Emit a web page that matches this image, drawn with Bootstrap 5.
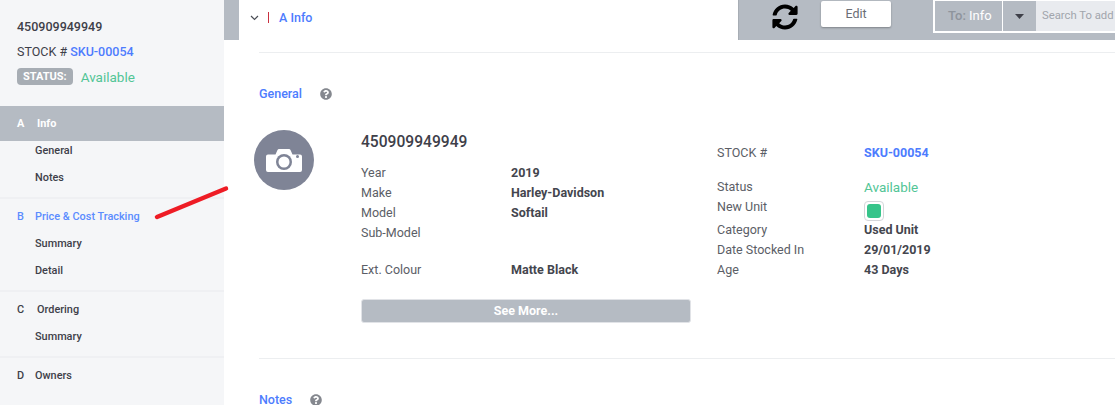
<!DOCTYPE html>
<html lang="en">
<head>
    <meta charset="UTF-8">
    <meta name="viewport" content="width=device-width, initial-scale=1.0">
    <title>Stock Unit</title>
    <link rel="stylesheet" href="https://cdn.jsdelivr.net/npm/bootstrap@5.3.0/dist/css/bootstrap.min.css">
    <style>
        html, body { height: 405px; overflow: hidden; }
        body { font-family: Roboto, "Liberation Sans", sans-serif; font-size: 12.5px; color: #4a4d55; background: #fff; }
        a { text-decoration: none; color: #4d7cfe; }
        .page-wrap { height: 405px; }

        .side-bar { width: 224px; flex: none; background: #f5f6f8; color: #3e4049; }
        .side-head { height: 106px; padding: 18px 17px 0; font-size: 12.5px; }
        .head-line { height: 25px; line-height: 18px; }
        .status-tag { background: #a7adb4; color: #fff; font-size: 11px; font-weight: 700; border-radius: 4px; padding: 0 6px; height: 17px; line-height: 17px; margin-right: 8px; }
        .text-avail { color: #52c596; font-size: 13.5px; }
        .side-sect { border-bottom: 2px solid #eff0f3; }
        .side-title { height: 35px; padding: 2px 0 0 17px; font-weight: 500; font-size: 10.9px; }
        .side-title.on { background: #b5bbc3; color: #fff; font-weight: 700; }
        .side-title.blue { color: #5b8cff; }
        .side-letter { width: 18px; }
        .side-word { margin-left: 2px; }
        .side-subs { margin-top: -4px; padding-bottom: 6px; }
        .side-sub { display: block; height: 27px; line-height: 27px; padding-left: 35px; font-size: 10.9px; font-weight: 500; color: #3e4049; }

        .main-area { min-width: 0; }
        .top-strip { height: 40px; }
        .strip-stub { width: 15px; background: #b5bbc3; }
        .crumb { padding-left: 11px; color: #4d7cfe; font-weight: 500; }
        .crumb-bar { width: 1px; height: 11px; background: #c9303f; margin: 0 10px 6px 9px; }
        .tool-bar { width: 377px; background: #b5bbc3; border-left: 1px solid #a7adb4; }
        .refresh-ico { margin: 4px 0 0 33px; }
        .btn-edit { width: 70px; height: 26px; margin: 1px 0 0 23px; padding: 1px 0 0; background: #fff; border: 0; color: #6b6e75; font-size: 12.5px; border-radius: 2px; box-shadow: 0 1px 2px rgba(0,0,0,.3); }
        .to-box { height: 33px; width: 182px; margin-left: 42px; border: 2px solid #fff; border-right: 0; border-top-width: 1px; overflow: hidden; }
        .to-label { width: 68px; flex: none; padding-left: 13px; line-height: 30px; font-size: 13px; color: #fff; border-right: 1px solid #fff; }
        .to-label span { color: #8e949c; font-weight: 500; }
        .to-caret { width: 33px; flex: none; }
        .to-search { background: #e9ebef; color: #a1a5ac; font-size: 11.3px; line-height: 30px; padding-left: 6px; white-space: nowrap; }

        .content-pad { padding-left: 35px; }
        .rule-line { border-top: 1px solid #eceef0; }
        .sect-head { margin-top: 32px; height: 18px; }
        .sect-name { font-weight: 500; color: #4d7cfe; font-size: 12.5px; }
        .help-ico { margin-left: 18px; }
        .cam-circle { width: 60px; height: 60px; border-radius: 50%; background: #7f8496; margin: -1px 47px 0 -5px; flex: none; }
        .unit-col { width: 330px; margin-right: 26px; }
        .unit-title { font-size: 15.6px; font-weight: 500; color: #3e4049; height: 32px; line-height: 22px; }
        .info-row { height: 20px; line-height: 20px; }
        .info-key { width: 150px; color: #5b5e66; }
        .info-val { font-weight: 700; color: #44464e; }
        .key-narrow { width: 147px; }
        .see-more { height: 24px; width: 330px; padding: 0; background: #b5bbc3; color: #fff; font-weight: 700; font-size: 12.5px; border: 1px solid #e1e3e7; border-radius: 3px; margin-top: 19px; }
        .tick-box { width: 20px; height: 20px; border: 1px solid #d4d6da; border-radius: 4px; }
        .tick-fill { width: 14px; height: 14px; background: #36c48a; border-radius: 3px; }
        .red-mark { position: absolute; left: 150px; top: 180px; }
    </style>
</head>
<body>
    <div class="d-flex page-wrap position-relative">
        <aside class="side-bar">
            <div class="side-head">
                <div class="head-line fw-medium">450909949949</div>
                <div class="head-line">STOCK # <a href="#" class="fw-medium">SKU-00054</a></div>
                <div class="head-line d-flex align-items-start"><span class="status-tag">STATUS:</span><span class="text-avail">Available</span></div>
            </div>
            <div class="side-sect">
                <div class="side-title on d-flex align-items-center"><span class="side-letter">A</span><span class="side-word">Info</span></div>
                <div class="side-subs">
                    <a href="#" class="side-sub">General</a>
                    <a href="#" class="side-sub">Notes</a>
                </div>
            </div>
            <div class="side-sect">
                <div class="side-title blue d-flex align-items-center"><span class="side-letter">B</span><span>Price &amp; Cost Tracking</span></div>
                <div class="side-subs">
                    <a href="#" class="side-sub">Summary</a>
                    <a href="#" class="side-sub">Detail</a>
                </div>
            </div>
            <div class="side-sect">
                <div class="side-title d-flex align-items-center"><span class="side-letter">C</span><span class="side-word">Ordering</span></div>
                <div class="side-subs">
                    <a href="#" class="side-sub">Summary</a>
                </div>
            </div>
            <div class="side-title d-flex align-items-center"><span class="side-letter">D</span><span>Owners</span></div>
        </aside>

        <main class="main-area flex-grow-1">
            <div class="top-strip d-flex">
                <div class="strip-stub"></div>
                <div class="crumb flex-grow-1 d-flex align-items-center">
                    <svg width="9" height="6" viewBox="0 0 9 6" class="mb-1"><path d="M1 1l3.5 3.5L8 1" fill="none" stroke="#4a4d55" stroke-width="1.2"/></svg>
                    <span class="crumb-bar"></span>
                    <span class="mb-1">A Info</span>
                </div>
                <div class="tool-bar d-flex align-items-start">
                    <svg class="refresh-ico" width="26" height="26" viewBox="0 0 512 512"><path fill="#000" d="M370.72 133.28C339.458 104.008 298.888 87.962 255.848 88c-77.458.068-144.328 53.178-162.791 126.85-1.344 5.363-6.122 9.15-11.651 9.15H24.103c-7.498 0-13.194-6.807-11.807-14.176C33.933 94.924 134.813 8 256 8c66.448 0 126.791 26.136 171.315 68.685L463.03 40.97C478.149 25.851 504 36.559 504 57.941V192c0 13.255-10.745 24-24 24H345.941c-21.382 0-32.09-25.851-16.971-40.971l41.75-41.749zM32 296h134.059c21.382 0 32.09 25.851 16.971 40.971l-41.75 41.75c31.262 29.273 71.835 45.319 114.876 45.28 77.418-.07 144.315-53.144 162.787-126.849 1.344-5.363 6.122-9.15 11.651-9.15h57.304c7.498 0 13.194 6.807 11.807 14.176C478.067 417.076 377.187 504 256 504c-66.448 0-126.791-26.136-171.315-68.685L48.97 471.03C33.851 486.149 8 475.441 8 454.059V320c0-13.255 10.745-24 24-24z"/></svg>
                    <button class="btn btn-edit">Edit</button>
                    <div class="to-box d-flex">
                        <div class="to-label"><span>To:</span> Info</div>
                        <div class="to-caret d-flex align-items-center justify-content-center"><svg width="9" height="5" viewBox="0 0 9 5"><path d="M0 0h9L4.5 5z" fill="#3e4049"/></svg></div>
                        <div class="to-search flex-grow-1">Search To add</div>
                    </div>
                </div>
            </div>

            <div class="content-pad">
                <div class="rule-line" style="margin-top: 12px"></div>
                <div class="sect-head d-flex align-items-center">
                    <span class="sect-name">General</span>
                    <svg class="help-ico" width="12" height="12" viewBox="0 0 512 512"><path fill="#85888f" d="M504 256c0 136.997-111.043 248-248 248S8 392.997 8 256C8 119.083 119.043 8 256 8s248 111.083 248 248zM262.655 90c-54.497 0-89.255 22.957-116.549 63.758-3.536 5.286-2.353 12.415 2.715 16.258l34.699 26.31c5.205 3.947 12.621 3.008 16.665-2.122 17.864-22.658 30.113-35.797 57.303-35.797 20.429 0 45.698 13.148 45.698 32.958 0 14.976-12.363 22.667-32.534 33.976C247.128 238.528 216 254.941 216 296v4c0 6.627 5.373 12 12 12h56c6.627 0 12-5.373 12-12v-1.333c0-28.462 83.186-29.647 83.186-106.667 0-58.002-60.165-102-116.531-102zM256 338c-25.365 0-46 20.635-46 46 0 25.364 20.635 46 46 46s46-20.636 46-46c0-25.365-20.635-46-46-46z"/></svg>
                </div>
                <div class="d-flex" style="margin-top: 28px">
                    <div class="cam-circle d-flex align-items-center justify-content-center">
                        <svg width="36" height="23" viewBox="0 0 36 23"><path fill="#fff" d="M2 5.500h7.500L11.500 1q.5-1 1.500-1h10q1 0 1.500 1l2 4.500H34q2 0 2 2V21q0 2-2 2H2q-2 0-2-2V7.500q0-2 2-2z"/><circle cx="18" cy="13" r="8" fill="#7f8496"/><circle cx="18" cy="13" r="5.500" fill="#fff"/><circle cx="31.500" cy="7.500" r="1.500" fill="#7f8496"/></svg>
                    </div>
                    <div class="unit-col">
                        <div class="unit-title">450909949949</div>
                        <div class="info-row d-flex"><span class="info-key">Year</span><span class="info-val">2019</span></div>
                        <div class="info-row d-flex"><span class="info-key">Make</span><span class="info-val">Harley-Davidson</span></div>
                        <div class="info-row d-flex"><span class="info-key">Model</span><span class="info-val">Softail</span></div>
                        <div class="info-row d-flex"><span class="info-key">Sub-Model</span></div>
                        <div class="info-row d-flex" style="margin-top: 17px"><span class="info-key">Ext. Colour</span><span class="info-val">Matte Black</span></div>
                        <button class="btn see-more d-block">See More...</button>
                    </div>
                    <div>
                        <div class="info-row d-flex" style="margin-top: 12px"><span class="info-key key-narrow">STOCK #</span><a href="#" class="fw-bold">SKU-00054</a></div>
                        <div class="info-row d-flex" style="margin-top: 14px"><span class="info-key key-narrow">Status</span><span class="text-avail">Available</span></div>
                        <div class="info-row d-flex"><span class="info-key key-narrow">New Unit</span><span class="tick-box d-flex align-items-center justify-content-center mt-1"><span class="tick-fill"></span></span></div>
                        <div class="info-row d-flex" style="margin-top: 3px"><span class="info-key key-narrow">Category</span><span class="info-val">Used Unit</span></div>
                        <div class="info-row d-flex"><span class="info-key key-narrow">Date Stocked In</span><span class="info-val">29/01/2019</span></div>
                        <div class="info-row d-flex"><span class="info-key key-narrow">Age</span><span class="info-val">43 Days</span></div>
                    </div>
                </div>
                <div class="rule-line" style="margin-top: 35px"></div>
                <div class="sect-head d-flex align-items-center">
                    <span class="sect-name">Notes</span>
                    <svg class="help-ico" width="12" height="12" viewBox="0 0 512 512"><path fill="#85888f" d="M504 256c0 136.997-111.043 248-248 248S8 392.997 8 256C8 119.083 119.043 8 256 8s248 111.083 248 248zM262.655 90c-54.497 0-89.255 22.957-116.549 63.758-3.536 5.286-2.353 12.415 2.715 16.258l34.699 26.31c5.205 3.947 12.621 3.008 16.665-2.122 17.864-22.658 30.113-35.797 57.303-35.797 20.429 0 45.698 13.148 45.698 32.958 0 14.976-12.363 22.667-32.534 33.976C247.128 238.528 216 254.941 216 296v4c0 6.627 5.373 12 12 12h56c6.627 0 12-5.373 12-12v-1.333c0-28.462 83.186-29.647 83.186-106.667 0-58.002-60.165-102-116.531-102zM256 338c-25.365 0-46 20.635-46 46 0 25.364 20.635 46 46 46s46-20.636 46-46c0-25.365-20.635-46-46-46z"/></svg>
                </div>
            </div>
        </main>

        <svg class="red-mark" width="85" height="45" viewBox="0 0 85 45"><path d="M7 37L76 8.500" stroke="#ee1c25" stroke-width="4.500" stroke-linecap="round"/></svg>
    </div>
    <script src="https://cdn.jsdelivr.net/npm/bootstrap@5.3.0/dist/js/bootstrap.bundle.min.js"></script>
</body>
</html>
